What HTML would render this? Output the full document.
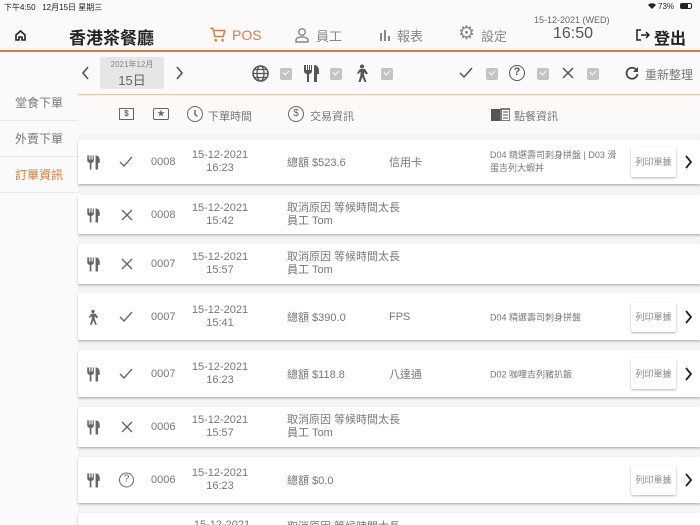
<!DOCTYPE html>
<html style="width:700px;height:525px;overflow:hidden"><head><meta charset="utf-8"><style>
*{margin:0;padding:0;box-sizing:border-box}
body{width:700px;height:525px;overflow:hidden;background:#f4f4f4;font-family:"Liberation Sans","Noto Sans CJK TC",sans-serif;color:#555;position:relative}
.a{position:absolute}
.hdr{left:0;top:0;width:700px;height:52px;background:#fafafa;border-bottom:2px solid #e07a3c}
.side{left:0;top:52px;width:78px;height:473px;background:#fafafa}
.si{position:absolute;left:0;width:78px;height:36px;line-height:36px;text-align:center;font-size:12px;color:#777;border-bottom:1px solid #e8e8e8}
.fb{left:78px;top:52px;width:622px;height:43px;background:#fafafa;border-bottom:1px solid #f3c4a8}
.ch{left:78px;top:96px;width:622px;height:38px;background:#fafafa}
.cb{display:inline-block;width:12px;height:12px;background:#c4c4c4;border-radius:2px;position:absolute}
.cb:after{content:"";position:absolute;left:3px;top:2px;width:5px;height:3px;border-left:1.5px solid #fff;border-bottom:1.5px solid #fff;transform:rotate(-45deg)}
.row{position:absolute;left:78px;width:622px;background:#fff;box-shadow:0 1.5px 2px rgba(0,0,0,.25);font-size:11px;color:#777}
.c{position:absolute;top:50%;transform:translateY(-50%);white-space:nowrap}
.btn{position:absolute;right:24px;top:50%;transform:translateY(-50%);width:45px;height:30px;line-height:30px;text-align:center;font-size:9px;color:#888;background:#fff;box-shadow:0 1px 2px rgba(0,0,0,.3);border-radius:2px}
.arr{position:absolute;right:7px;top:50%;transform:translateY(-50%)}
.dt{position:absolute;left:106px;width:72px;text-align:center;line-height:13px;top:50%;transform:translateY(-50%);white-space:nowrap}
</style></head><body>
<div class="a hdr"></div>
<div class="a" style="left:4px;top:2px;font-size:8px;color:#222">下午4:50&nbsp;&nbsp; 12月15日 星期三</div>
<div class="a" style="left:658px;top:2px;font-size:8px;color:#222">73%</div>
<div class="a" style="left:680px;top:3px;width:12px;height:6px;border:1px solid #222;border-radius:2px"><div style="width:7px;height:4px;background:#222"></div></div>
<svg class="a" style="left:648px;top:3px" width="8" height="6" viewBox="0 0 8 6"><path d="M0 2 A5.5 5.5 0 0 1 8 2 L4 6Z" fill="#222"/></svg>
<svg class="a" style="left:14px;top:29px" width="13" height="13" viewBox="0 0 13 13"><path d="M2 6 L6.5 2 L11 6 V11 H8 V8 H5 V11 H2Z" fill="none" stroke="#222" stroke-width="1.6"/></svg>
<div class="a" style="left:69px;top:24px;font-size:17px;color:#222;font-weight:bold">香港茶餐廳</div>
<svg class="a" style="left:209px;top:26px" width="18" height="18" viewBox="0 0 24 24"><path d="M2 3h3l3 11h11l2-8H7" fill="none" stroke="#e07a3c" stroke-width="2"/><circle cx="9" cy="19" r="1.8" fill="#e07a3c"/><circle cx="18" cy="19" r="1.8" fill="#e07a3c"/></svg>
<div class="a" style="left:232px;top:27px;font-size:14px;color:#e07a3c">POS</div>
<svg class="a" style="left:295px;top:27px" width="14" height="16" viewBox="0 0 14 16"><circle cx="7" cy="5" r="3.2" fill="none" stroke="#888" stroke-width="1.4"/><path d="M1 15v-2c0-2 3-3 6-3s6 1 6 3v2z" fill="none" stroke="#888" stroke-width="1.4"/></svg>
<div class="a" style="left:316px;top:26px;font-size:13px;color:#888">員工</div>
<svg class="a" style="left:379px;top:30px" width="12" height="11" viewBox="0 0 12 11"><rect x="1" y="3" width="2" height="8" fill="#888"/><rect x="5" y="0" width="2" height="11" fill="#888"/><rect x="9" y="6" width="2" height="5" fill="#888"/></svg>
<div class="a" style="left:397px;top:26px;font-size:13px;color:#888">報表</div>
<div class="a" style="left:458px;top:22px;font-size:19px;color:#888">⚙</div>
<div class="a" style="left:481px;top:26px;font-size:13px;color:#888">設定</div>
<div class="a" style="left:534px;top:15px;font-size:9px;color:#666">15-12-2021 (WED)</div>
<div class="a" style="left:553px;top:25px;font-size:16px;color:#555">16:50</div>
<svg class="a" style="left:636px;top:29px" width="14" height="12" viewBox="0 0 14 12"><path d="M5 1H1v10h4M5 6h8M10 3l3 3-3 3" fill="none" stroke="#222" stroke-width="1.5"/></svg>
<div class="a" style="left:654px;top:25px;font-size:16px;color:#222;font-weight:bold">登出</div>

<div class="a side"></div>
<div class="si" style="top:85px">堂食下單</div>
<div class="si" style="top:121px">外賣下單</div>
<div class="si" style="top:157px;color:#e07a3c">訂單資訊</div>

<div class="a fb"></div>
<svg class="a" style="left:81px;top:66px" width="9" height="14"><path d="M7 1L2 7l5 6" fill="none" stroke="#555" stroke-width="1.6"/></svg>
<div class="a" style="left:100px;top:57px;width:64px;height:32px;background:#e6e6e6;border-radius:2px;text-align:center"><div style="font-size:8px;color:#888;margin-top:2px">2021年12月</div><div style="font-size:13px;color:#666">15日</div></div>
<svg class="a" style="left:175px;top:66px" width="9" height="14"><path d="M2 1l5 6-5 6" fill="none" stroke="#555" stroke-width="1.6"/></svg>
<svg class="a" style="left:252px;top:65px" width="17" height="17" viewBox="0 0 17 17"><circle cx="8.5" cy="8.5" r="7.5" fill="none" stroke="#555" stroke-width="1.5"/><ellipse cx="8.5" cy="8.5" rx="3.5" ry="7.5" fill="none" stroke="#555" stroke-width="1.3"/><path d="M1 8.5h15M2.5 4.5h12M2.5 12.5h12" stroke="#555" stroke-width="1.2"/></svg>
<span class="cb" style="left:280px;top:68px"></span>
<svg class="a" style="left:303px;top:64px" width="17" height="18" viewBox="0 0 17 18"><path d="M1 1v6c0 2 2 3 3 3v8h2v-8c1 0 3-1 3-3V1H8v5H7V1H6v5H5V1H4v5H3V1z" fill="#555"/><path d="M11 1c3 0 5 2 5 6v3h-2v8h-3z" fill="#555"/></svg>
<span class="cb" style="left:330px;top:68px"></span>
<svg class="a" style="left:355px;top:64px" width="14" height="18" viewBox="0 0 14 18"><circle cx="7" cy="2.5" r="2" fill="#555"/><path d="M5 5l-3 4 1.5 1 2-2.5 0 3.5-2 7h2l2-5 2 5h2l-2.5-7v-3l2 2.5 2-1-3-4.5z" fill="#555"/></svg>
<span class="cb" style="left:381px;top:68px"></span>
<svg class="a" style="left:459px;top:67px" width="14" height="12" viewBox="0 0 14 12"><path d="M1 6l4 4 8-9" fill="none" stroke="#555" stroke-width="1.5"/></svg>
<span class="cb" style="left:486px;top:68px"></span>
<div class="a" style="left:509px;top:65px;width:16px;height:16px;border:1.5px solid #555;border-radius:50%;font-size:11px;line-height:13px;text-align:center;color:#555;font-weight:bold">?</div>
<span class="cb" style="left:537px;top:68px"></span>
<svg class="a" style="left:562px;top:67px" width="12" height="12" viewBox="0 0 12 12"><path d="M1 1l10 10M11 1L1 11" stroke="#555" stroke-width="1.5"/></svg>
<span class="cb" style="left:587px;top:68px"></span>
<svg class="a" style="left:625px;top:66px" width="14" height="14" viewBox="0 0 14 14"><path d="M11.5 4A5.5 5.5 0 1 0 12.5 8" fill="none" stroke="#444" stroke-width="1.8"/><path d="M13 1v5H8z" fill="#444"/></svg>
<div class="a" style="left:645px;top:66px;font-size:12px;color:#777">重新整理</div>

<div class="a ch"></div>
<div class="a" style="left:119px;top:108px;width:15px;height:12px;border:1.5px solid #666;font-size:8px;text-align:center;line-height:9px;color:#666;font-weight:bold">$</div>
<div class="a" style="left:153px;top:108px;width:16px;height:12px;border:1.5px solid #666;border-radius:2px;font-size:8px;text-align:center;line-height:9px;color:#666">★</div>
<div class="a" style="left:187px;top:106px;width:16px;height:16px;border:1.5px solid #666;border-radius:50%"></div>
<svg class="a" style="left:187px;top:106px" width="16" height="16"><path d="M8 4v4.5l2.5 2" fill="none" stroke="#666" stroke-width="1.4"/></svg>
<div class="a" style="left:208px;top:108px;font-size:11px;color:#777">下單時間</div>
<div class="a" style="left:288px;top:106px;width:16px;height:16px;border:1.5px solid #666;border-radius:50%;font-size:10px;text-align:center;line-height:13px;color:#666">$</div>
<div class="a" style="left:310px;top:108px;font-size:11px;color:#777">交易資訊</div>
<svg class="a" style="left:491px;top:108px" width="19" height="13" viewBox="0 0 19 13"><path d="M0 1h9v12H0z" fill="#555"/><path d="M10 1h9v12h-9z" fill="none" stroke="#555" stroke-width="1.5"/><path d="M12 4h5M12 7h5M12 10h5" stroke="#555" stroke-width="1"/></svg>
<div class="a" style="left:514px;top:108px;font-size:11px;color:#777">點餐資訊</div>

<div class="row" style="top:140px;height:44px">
<svg class="c" style="left:8px" width="15" height="15" viewBox="0 0 17 18"><path d="M1 1v6c0 2 2 3 3 3v8h2v-8c1 0 3-1 3-3V1H8v5H7V1H6v5H5V1H4v5H3V1z" fill="#666"/><path d="M11 1c3 0 5 2 5 6v3h-2v8h-3z" fill="#666"/></svg>
<svg class="c" style="left:41px" width="14" height="12" viewBox="0 0 14 12"><path d="M1 6l4 4 8-9" fill="none" stroke="#666" stroke-width="1.4"/></svg>
<span class="c" style="left:73px">0008</span><div class="dt">15-12-2021<br>16:23</div>
<span class="c" style="left:209px">總額 $523.6</span><span class="c" style="left:311px">信用卡</span>
<div class="c" style="left:412px;width:135px;font-size:9px;line-height:13px;white-space:normal">D04 精選壽司刺身拼盤 | D03 滑蛋吉列大蝦丼</div>
<div class="btn">列印單據</div><svg class="arr" width="9" height="14"><path d="M2 1l5 6-5 6" fill="none" stroke="#222" stroke-width="1.8"/></svg></div>

<div class="row" style="top:195px;height:39px">
<svg class="c" style="left:8px" width="15" height="15" viewBox="0 0 17 18"><path d="M1 1v6c0 2 2 3 3 3v8h2v-8c1 0 3-1 3-3V1H8v5H7V1H6v5H5V1H4v5H3V1z" fill="#666"/><path d="M11 1c3 0 5 2 5 6v3h-2v8h-3z" fill="#666"/></svg>
<svg class="c" style="left:43px" width="12" height="12"><path d="M1 1l10 10M11 1L1 11" stroke="#666" stroke-width="1.4"/></svg>
<span class="c" style="left:73px">0008</span><div class="dt">15-12-2021<br>15:42</div>
<div class="c" style="left:209px;line-height:13px">取消原因 等候時間太長<br>員工 Tom</div></div>

<div class="row" style="top:244px;height:40px">
<svg class="c" style="left:8px" width="15" height="15" viewBox="0 0 17 18"><path d="M1 1v6c0 2 2 3 3 3v8h2v-8c1 0 3-1 3-3V1H8v5H7V1H6v5H5V1H4v5H3V1z" fill="#666"/><path d="M11 1c3 0 5 2 5 6v3h-2v8h-3z" fill="#666"/></svg>
<svg class="c" style="left:43px" width="12" height="12"><path d="M1 1l10 10M11 1L1 11" stroke="#666" stroke-width="1.4"/></svg>
<span class="c" style="left:73px">0007</span><div class="dt">15-12-2021<br>15:57</div>
<div class="c" style="left:209px;line-height:13px">取消原因 等候時間太長<br>員工 Tom</div></div>

<div class="row" style="top:293px;height:47px">
<svg class="c" style="left:9px" width="12" height="16" viewBox="0 0 14 18"><circle cx="7" cy="2.5" r="2" fill="#666"/><path d="M5 5l-3 4 1.5 1 2-2.5 0 3.5-2 7h2l2-5 2 5h2l-2.5-7v-3l2 2.5 2-1-3-4.5z" fill="#666"/></svg>
<svg class="c" style="left:41px" width="14" height="12" viewBox="0 0 14 12"><path d="M1 6l4 4 8-9" fill="none" stroke="#666" stroke-width="1.4"/></svg>
<span class="c" style="left:73px">0007</span><div class="dt">15-12-2021<br>15:41</div>
<span class="c" style="left:209px">總額 $390.0</span><span class="c" style="left:311px">FPS</span>
<span class="c" style="left:412px;font-size:9px">D04 精選壽司刺身拼盤</span>
<div class="btn">列印單據</div><svg class="arr" width="9" height="14"><path d="M2 1l5 6-5 6" fill="none" stroke="#222" stroke-width="1.8"/></svg></div>

<div class="row" style="top:350px;height:47px">
<svg class="c" style="left:8px" width="15" height="15" viewBox="0 0 17 18"><path d="M1 1v6c0 2 2 3 3 3v8h2v-8c1 0 3-1 3-3V1H8v5H7V1H6v5H5V1H4v5H3V1z" fill="#666"/><path d="M11 1c3 0 5 2 5 6v3h-2v8h-3z" fill="#666"/></svg>
<svg class="c" style="left:41px" width="14" height="12" viewBox="0 0 14 12"><path d="M1 6l4 4 8-9" fill="none" stroke="#666" stroke-width="1.4"/></svg>
<span class="c" style="left:73px">0007</span><div class="dt">15-12-2021<br>16:23</div>
<span class="c" style="left:209px">總額 $118.8</span><span class="c" style="left:311px">八達通</span>
<span class="c" style="left:412px;font-size:9px">D02 咖哩吉列豬扒飯</span>
<div class="btn">列印單據</div><svg class="arr" width="9" height="14"><path d="M2 1l5 6-5 6" fill="none" stroke="#222" stroke-width="1.8"/></svg></div>

<div class="row" style="top:407px;height:40px">
<svg class="c" style="left:8px" width="15" height="15" viewBox="0 0 17 18"><path d="M1 1v6c0 2 2 3 3 3v8h2v-8c1 0 3-1 3-3V1H8v5H7V1H6v5H5V1H4v5H3V1z" fill="#666"/><path d="M11 1c3 0 5 2 5 6v3h-2v8h-3z" fill="#666"/></svg>
<svg class="c" style="left:43px" width="12" height="12"><path d="M1 1l10 10M11 1L1 11" stroke="#666" stroke-width="1.4"/></svg>
<span class="c" style="left:73px">0006</span><div class="dt">15-12-2021<br>15:57</div>
<div class="c" style="left:209px;line-height:13px">取消原因 等候時間太長<br>員工 Tom</div></div>

<div class="row" style="top:457px;height:46px">
<svg class="c" style="left:8px" width="15" height="15" viewBox="0 0 17 18"><path d="M1 1v6c0 2 2 3 3 3v8h2v-8c1 0 3-1 3-3V1H8v5H7V1H6v5H5V1H4v5H3V1z" fill="#666"/><path d="M11 1c3 0 5 2 5 6v3h-2v8h-3z" fill="#666"/></svg>
<div class="c" style="left:41px;width:15px;height:15px;border:1.3px solid #666;border-radius:50%;font-size:10px;line-height:12px;text-align:center;color:#666">?</div>
<span class="c" style="left:73px">0006</span><div class="dt">15-12-2021<br>16:23</div>
<span class="c" style="left:209px">總額 $0.0</span>
<div class="btn">列印單據</div><svg class="arr" width="9" height="14"><path d="M2 1l5 6-5 6" fill="none" stroke="#222" stroke-width="1.8"/></svg></div>

<div class="row" style="top:513px;height:12px;overflow:hidden">
<div style="position:absolute;left:114px;top:6px;width:60px;text-align:center">15-12-2021</div>
<div style="position:absolute;left:209px;top:5px">取消原因 等候時間太長</div></div>
</body></html>
